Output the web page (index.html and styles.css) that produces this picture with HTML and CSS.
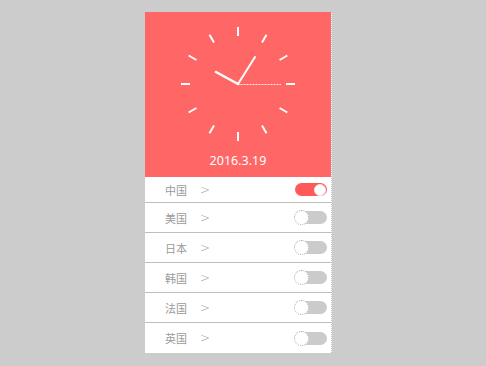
FILE: index.html
```html
<!DOCTYPE html>
<html lang="zh">
<head>
<meta charset="utf-8">
<title>Clock</title>
<link rel="stylesheet" href="styles.css">
</head>
<body>
<div class="panel">
  <div class="header">
    <svg class="clock" width="120" height="120" viewBox="-60 -60 120 120">
      <g stroke="#fff" stroke-width="2" stroke-linecap="butt">
        <line x1="0" y1="-57" x2="0" y2="-48" transform="rotate(0)"/>
        <line x1="0" y1="-57" x2="0" y2="-48" transform="rotate(30)"/>
        <line x1="0" y1="-57" x2="0" y2="-48" transform="rotate(60)"/>
        <line x1="0" y1="-57" x2="0" y2="-48" transform="rotate(90)"/>
        <line x1="0" y1="-57" x2="0" y2="-48" transform="rotate(120)"/>
        <line x1="0" y1="-57" x2="0" y2="-48" transform="rotate(150)"/>
        <line x1="0" y1="-57" x2="0" y2="-48" transform="rotate(180)"/>
        <line x1="0" y1="-57" x2="0" y2="-48" transform="rotate(210)"/>
        <line x1="0" y1="-57" x2="0" y2="-48" transform="rotate(240)"/>
        <line x1="0" y1="-57" x2="0" y2="-48" transform="rotate(270)"/>
        <line x1="0" y1="-57" x2="0" y2="-48" transform="rotate(300)"/>
        <line x1="0" y1="-57" x2="0" y2="-48" transform="rotate(330)"/>
      </g>
      <line x1="0" y1="0" x2="-22" y2="-12" stroke="#fff" stroke-width="2.5" stroke-linecap="round"/>
      <line x1="0" y1="0" x2="17" y2="-27" stroke="#fff" stroke-width="2" stroke-linecap="round"/>
      <line x1="0" y1="0.5" x2="43" y2="0.5" stroke="#fff" stroke-opacity="0.9" stroke-width="1" stroke-dasharray="1 0.5"/>
    </svg>
    <div class="date">2016.3.19</div>
  </div>
  <ul class="list">
    <li class="row first"><span class="label">中国</span><span class="chev">&gt;</span><span class="toggle on"><span class="knob"></span></span></li>
    <li class="row"><span class="label">美国</span><span class="chev">&gt;</span><span class="toggle"><span class="knob"></span></span></li>
    <li class="row"><span class="label">日本</span><span class="chev">&gt;</span><span class="toggle"><span class="knob"></span></span></li>
    <li class="row"><span class="label">韩国</span><span class="chev">&gt;</span><span class="toggle"><span class="knob"></span></span></li>
    <li class="row"><span class="label">法国</span><span class="chev">&gt;</span><span class="toggle"><span class="knob"></span></span></li>
    <li class="row last"><span class="label">英国</span><span class="chev">&gt;</span><span class="toggle"><span class="knob"></span></span></li>
  </ul>
</div>
</body>
</html>
```
FILE: styles.css
```css
html, body {
  margin: 0;
  padding: 0;
  background: #cccccc;
  font-family: "Noto Sans CJK SC", "Noto Sans", sans-serif;
}
.panel {
  margin: 12px 0 0 145px;
  width: 187px;
  background: #fff;
  border-right: 1px dotted #c4c4c4;
  box-sizing: border-box;
}
.header {
  height: 165px;
  background: #ff6666;
  display: flex;
  flex-direction: column;
  align-items: center;
}
.clock {
  display: block;
  margin-top: 12px;
}
.date {
  margin-top: 9px;
  color: #fff;
  font-family: "Noto Sans", sans-serif;
  font-size: 12.5px;
  line-height: 16px;
}
.list {
  list-style: none;
  margin: 0;
  padding: 0;
}
.row {
  height: 29px;
  border-bottom: 1px solid #bdbdbd;
  display: flex;
  align-items: center;
  padding: 0 4px 0 20px;
}
.row.first {
  height: 25px;
}
.row.last {
  border-bottom: none;
  height: 30px;
}
.label {
  width: 35px;
  color: #9a9a9a;
  font-size: 11px;
  line-height: 14px;
}
.chev {
  color: #a0a0a0;
  font-size: 12px;
  line-height: 14px;
  font-family: "DejaVu Sans", sans-serif;
  font-weight: 200;
}
.toggle {
  margin-left: auto;
  width: 32px;
  height: 13px;
  border-radius: 7px;
  background: #cbcbcb;
  position: relative;
  box-sizing: border-box;
}
.toggle .knob {
  position: absolute;
  left: -1px;
  top: -1px;
  width: 15px;
  height: 15px;
  border-radius: 50%;
  background: #fff;
  border: 1px dotted #a9a9a9;
  box-sizing: border-box;
}
.toggle.on {
  background: #ff5a5a;
}
.toggle.on .knob {
  left: auto;
  right: 1px;
  top: 0.5px;
  width: 12px;
  height: 12px;
  border: 1px solid #f0f0f0;
}
```
